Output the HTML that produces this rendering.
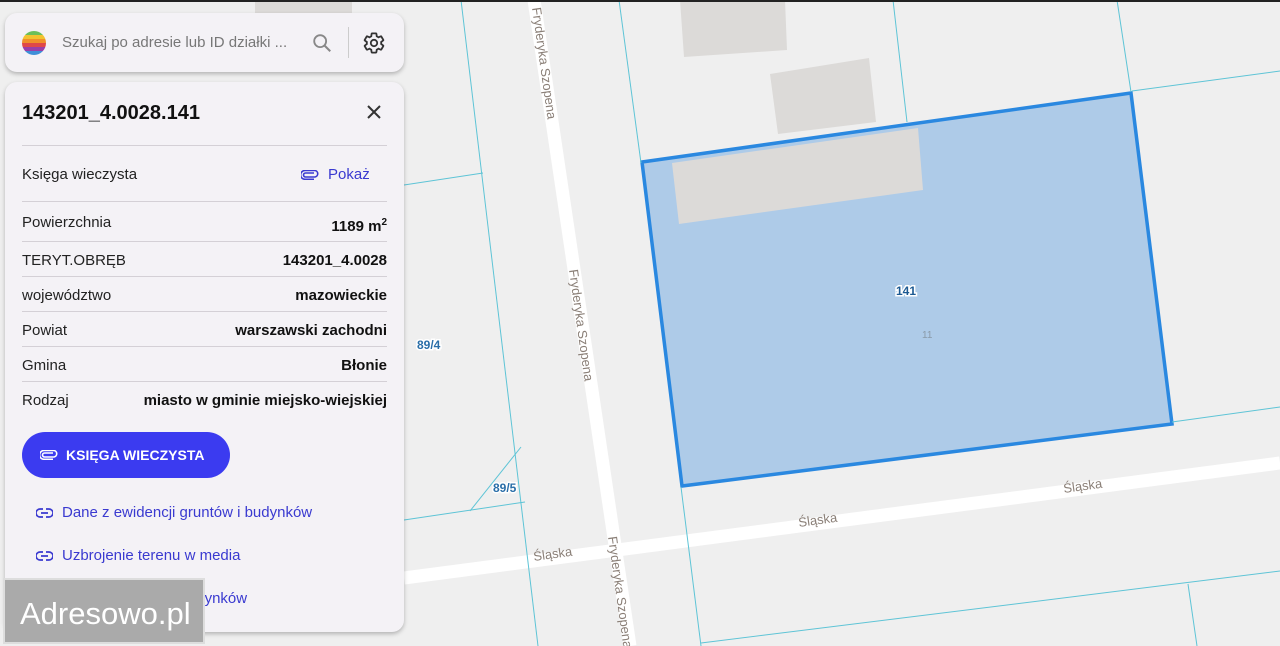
<!DOCTYPE html>
<html><head><meta charset="utf-8"><style>
*{margin:0;padding:0;box-sizing:border-box}
body{width:1280px;height:646px;overflow:hidden;position:relative;background:#efefef;font-family:"Liberation Sans",sans-serif}
.abs{position:absolute}
.panel{position:absolute;left:5px;width:399px;background:#f4f2f6;border-radius:12px;box-shadow:0 2px 4px rgba(0,0,0,.25)}
.row{position:absolute;left:22px;width:365px;font-size:15px;color:#222}
.row b{position:absolute;right:0;top:0;color:#111}
.hr{position:absolute;left:22px;width:365px;height:1px;background:#d4d0d6}
.lnk{position:absolute;left:36px;font-size:15px;color:#3a3ad0;display:flex;align-items:center;gap:9px}
</style></head><body>
<svg class="abs" style="left:0;top:0" width="1280" height="646">
<g fill="#dcdad8">
<polygon points="255,0 352,0 352,13 255,13"/>
<polygon points="680,0 785,0 787,50 684,57"/>
<polygon points="770,74 869,58 876,122 778,134"/>
</g>
<polygon points="642,162 1131,93 1172,424 682,486" fill="#aecbe8"/>
<polygon points="672,163 918,128 923,190 679,224" fill="#dcdad8"/>
<polygon points="642,162 1131,93 1172,424 682,486" fill="none" stroke="#2a88e0" stroke-width="3.5"/>
<g stroke="#ffffff" stroke-width="13" fill="none">
<line x1="534" y1="0" x2="630" y2="646"/>
<line x1="404" y1="578" x2="1280" y2="463"/>
</g>
<g stroke="#5ec4d6" stroke-width="1" fill="none">
<line x1="461" y1="0" x2="538" y2="646"/>
<line x1="619" y1="0" x2="641" y2="163"/>
<line x1="893" y1="0" x2="907" y2="122"/>
<line x1="1117" y1="0" x2="1131" y2="92"/>
<line x1="1132" y1="91" x2="1280" y2="71"/>
<line x1="404" y1="185" x2="483" y2="173"/>
<line x1="1172" y1="422" x2="1280" y2="407"/>
<line x1="521" y1="447" x2="470" y2="511"/>
<line x1="404" y1="520" x2="525" y2="502"/>
<line x1="681" y1="487" x2="701" y2="646"/>
<line x1="701" y1="643" x2="1280" y2="571"/>
<line x1="1188" y1="584" x2="1197" y2="646"/>
</g>
<g font-family="Liberation Sans" font-size="13" fill="#8a7f77">
<text transform="translate(532,8) rotate(82)">Fryderyka Szopena</text>
<text transform="translate(569,270) rotate(82)">Fryderyka Szopena</text>
<text transform="translate(608,537) rotate(82)">Fryderyka Szopena</text>
<text transform="translate(534,561) rotate(-8)">Śląska</text>
<text transform="translate(799,527) rotate(-8)">Śląska</text>
<text transform="translate(1064,493) rotate(-8)">Śląska</text>
</g>
<g font-family="Liberation Sans" font-size="12" font-weight="bold" fill="#2a6ea8" stroke="#fff" stroke-width="3" paint-order="stroke">
<text x="417" y="349">89/4</text>
<text x="493" y="492">89/5</text>
<text x="896" y="295" fill="#1d5a92">141</text>
</g>
<text x="922" y="338" font-family="Liberation Sans" font-size="10" fill="#8a9aa8">11</text>
<rect x="0" y="0" width="1280" height="2" fill="#222"/>
</svg>

<div class="panel" style="top:13px;height:59px">
 <svg class="abs" style="left:16px;top:17px" width="26" height="26" viewBox="0 0 26 26">
  <clipPath id="c"><circle cx="13" cy="13" r="12"/></clipPath>
  <g clip-path="url(#c)">
   <rect y="0" width="26" height="5" fill="#6bbf5a"/><rect y="5" width="26" height="4" fill="#f2c230"/>
   <rect y="9" width="26" height="4" fill="#f0902a"/><rect y="13" width="26" height="4" fill="#e04848"/>
   <rect y="17" width="26" height="4" fill="#9a3fa8"/><rect y="21" width="26" height="5" fill="#3f8fd8"/>
  </g>
 </svg>
 <div class="abs" style="left:57px;top:21px;font-size:15px;color:#777">Szukaj po adresie lub ID działki ...</div>
 <svg class="abs" style="left:306px;top:19px" width="22" height="22" viewBox="0 0 24 24"><circle cx="10" cy="10" r="6.5" fill="none" stroke="#888" stroke-width="2"/><line x1="15" y1="15" x2="21" y2="21" stroke="#888" stroke-width="2.2"/></svg>
 <div class="abs" style="left:343px;top:14px;width:1px;height:31px;background:#ccc"></div>
 <svg class="abs" style="left:357px;top:18px" width="24" height="24" viewBox="0 0 24 24"><path fill="none" stroke="#333" stroke-width="1.8" d="M19.14 12.94c.04-.3.06-.61.06-.94 0-.32-.02-.64-.07-.94l2.03-1.58a.49.49 0 0 0 .12-.61l-1.92-3.32a.49.49 0 0 0-.59-.22l-2.39.96c-.5-.38-1.03-.7-1.62-.94l-.36-2.54a.48.48 0 0 0-.48-.41h-3.84c-.24 0-.43.17-.47.41l-.36 2.54c-.59.24-1.130.57-1.62.94l-2.39-.96a.49.49 0 0 0-.59.22L2.74 8.87c-.12.21-.08.47.12.61l2.03 1.58c-.05.3-.09.63-.09.94s.02.64.07.94l-2.030 1.58a.49.49 0 0 0-.12.61l1.92 3.32c.12.22.37.29.59.22l2.39-.96c.5.38 1.03.7 1.62.94l.36 2.54c.05.24.24.41.48.41h3.84c.24 0 .44-.17.47-.41l.36-2.54c.59-.24 1.13-.56 1.62-.94l2.39.96c.22.08.47 0 .59-.22l1.92-3.32c.12-.22.07-.47-.12-.61l-2.01-1.58z"/><circle cx="12" cy="12" r="3.2" fill="none" stroke="#333" stroke-width="1.8"/></svg>
</div>

<div class="panel" style="top:82px;height:550px"></div>
<div class="abs" style="left:22px;top:102px;font-size:20px;font-weight:bold;color:#111">143201_4.0028.141</div>
<svg class="abs" style="left:365px;top:103px" width="18" height="18" viewBox="0 0 18 18"><path d="M3 3L15 15M15 3L3 15" stroke="#333" stroke-width="2"/></svg>
<div class="hr" style="top:145px"></div>
<div class="row" style="top:166px">Księga wieczysta</div>
<div class="abs" style="left:301px;top:166px;font-size:15px;color:#3a3ad0;display:flex;align-items:center;gap:9px">
 <svg width="18" height="10" viewBox="0 0 18 10"><path d="M13 3H4.5a2 2 0 0 0 0 4H14a3.3 3.3 0 0 0 0-6.5H4a4.3 4.3 0 0 0 0 8.8h9" fill="none" stroke="#3a3ad0" stroke-width="1.6"/></svg>Pokaż</div>
<div class="hr" style="top:201px"></div>
<div class="row" style="top:214px">Powierzchnia<b style="top:3px">1189 m<sup style="font-size:10px">2</sup></b></div>
<div class="hr" style="top:241px"></div>
<div class="row" style="top:252px">TERYT.OBRĘB<b>143201_4.0028</b></div>
<div class="hr" style="top:276px"></div>
<div class="row" style="top:287px">województwo<b>mazowieckie</b></div>
<div class="hr" style="top:311px"></div>
<div class="row" style="top:322px">Powiat<b>warszawski zachodni</b></div>
<div class="hr" style="top:346px"></div>
<div class="row" style="top:357px">Gmina<b>Błonie</b></div>
<div class="hr" style="top:381px"></div>
<div class="row" style="top:392px">Rodzaj<b>miasto w gminie miejsko-wiejskiej</b></div>
<div class="abs" style="left:22px;top:432px;width:208px;height:46px;border-radius:23px;background:#3b3bf0;color:#fff;font-size:14px;font-weight:bold;display:flex;align-items:center;padding-left:18px;gap:8px">
 <svg width="18" height="10" viewBox="0 0 18 10"><path d="M13 3H4.5a2 2 0 0 0 0 4H14a3.3 3.3 0 0 0 0-6.5H4a4.3 4.3 0 0 0 0 8.8h9" fill="none" stroke="#fff" stroke-width="1.6"/></svg>KSIĘGA WIECZYSTA</div>
<div class="lnk" style="top:504px"><svg width="17" height="10" viewBox="0 0 17 10"><path d="M7 1H4a4 4 0 0 0 0 8h3M10 1h3a4 4 0 0 1 0 8h-3M5 5h7" fill="none" stroke="#3a3ad0" stroke-width="1.7"/></svg>Dane z ewidencji gruntów i budynków</div>
<div class="lnk" style="top:547px"><svg width="17" height="10" viewBox="0 0 17 10"><path d="M7 1H4a4 4 0 0 0 0 8h3M10 1h3a4 4 0 0 1 0 8h-3M5 5h7" fill="none" stroke="#3a3ad0" stroke-width="1.7"/></svg>Uzbrojenie terenu w media</div>
<div class="lnk" style="top:590px"><svg width="17" height="10" viewBox="0 0 17 10"><path d="M7 1H4a4 4 0 0 0 0 8h3M10 1h3a4 4 0 0 1 0 8h-3M5 5h7" fill="none" stroke="#3a3ad0" stroke-width="1.7"/></svg>Dane z ewidencji budynków</div>
<div class="abs" style="left:3px;top:578px;width:202px;height:66px;background:#aaa;border:2px solid #ddd;color:#fff;font-size:31px;padding:16px 0 0 15px">Adresowo.pl</div>
</body></html>
